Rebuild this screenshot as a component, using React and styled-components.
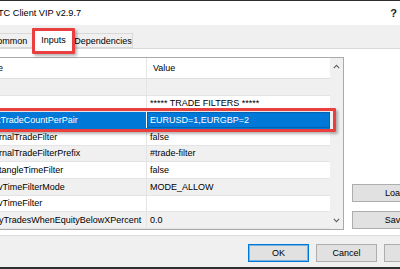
import React from 'react';
import styled, { createGlobalStyle } from 'styled-components';

const Global = createGlobalStyle`
  html, body { margin: 0; padding: 0; overflow: hidden; background: #fff; }
  body { font-family: "Liberation Sans", Arial, sans-serif; font-size: 9px; color: #000; }
  * { box-sizing: border-box; }
`;

const Window = styled.div`
  width: 400px;
  height: 269px;
  display: flex;
  flex-direction: column;
  overflow: hidden;
  border-top: 1px solid #2e2e2e;
  border-bottom: 2px solid #2e2e2e;
  background: #f0f0f0;
`;

const TitleBar = styled.div`
  height: 24px;
  flex: none;
  display: flex;
  align-items: center;
  justify-content: space-between;
  padding-right: 3px;
  background: #fff;
`;

const Title = styled.span`
  margin-left: -2px;
  font-size: 9.2px;
  color: #000;
`;

const Help = styled.span`
  font-size: 11px;
  font-weight: bold;
  color: #222;
`;

const TabStrip = styled.div`
  height: 24px;
  flex: none;
  display: flex;
  align-items: flex-end;
  background: #f0f0f0;
  border-bottom: 1px solid #d9d9d9;
  position: relative;
  z-index: 1;
`;

const Tab = styled.div`
  position: relative;
  flex: none;
  width: ${p => p.$w}px;
  margin-left: ${p => p.$ml || 0}px;
  height: ${p => (p.$active ? 19 : 15)}px;
  margin-bottom: ${p => (p.$active ? -1 : 0)}px;
  display: flex;
  align-items: center;
  justify-content: center;
  padding-top: ${p => (p.$active ? 0 : 1)}px;
  background: ${p => (p.$active ? '#fff' : '#f0f0f0')};
  border: 1px solid #d9d9d9;
  border-bottom: ${p => (p.$active ? 'none' : '1px solid #d9d9d9')};
  white-space: nowrap;
`;

const RedMark = styled.div`
  position: absolute;
  top: ${p => p.$t}px;
  bottom: ${p => p.$b}px;
  left: ${p => p.$l}px;
  right: ${p => p.$r}px;
  border: 3px solid #e9403f;
  border-radius: 1px;
  box-shadow: 2px 2px 3px rgba(0, 0, 0, 0.3);
  pointer-events: none;
  z-index: 3;
`;

const Body = styled.div`
  flex: 1;
  display: flex;
  align-items: stretch;
  padding: 8px 0 5px 0;
  background: #fff;
  border-bottom: 1px solid #dcdcdc;
`;

const Grid = styled.div`
  width: 344px;
  flex: none;
  display: flex;
  border: 1px solid #a9a9a9;
  border-left: none;
  background: #fff;
`;

const Table = styled.div`
  flex: 1;
  display: flex;
  flex-direction: column;
`;

const HeaderRow = styled.div`
  height: 21px;
  flex: none;
  display: grid;
  grid-template-columns: 147px 1fr;
  border-bottom: 1px solid #dedede;
`;

const HeaderCell = styled.div`
  display: flex;
  align-items: center;
  padding-left: ${p => p.$pad}px;
  border-right: ${p => (p.$divider ? '1px solid #e5e5e5' : 'none')};
  overflow: hidden;
  white-space: nowrap;
`;

const Row = styled.div`
  position: relative;
  height: 16.667px;
  flex: none;
  display: grid;
  grid-template-columns: 147px 1fr;
  background: ${p => (p.$sel ? '#0078d7' : p.$alt ? '#f0f0f0' : '#fff')};
  color: ${p => (p.$sel ? '#fff' : '#000')};
  border-bottom: 1px solid ${p => (p.$sel ? '#0078d7' : '#e4e4e4')};
`;

const NameCell = styled.div`
  display: flex;
  align-items: center;
  overflow: hidden;
  white-space: nowrap;
  border-right: 1px solid ${p => (p.$sel ? '#fff' : '#e4e4e4')};
`;

const NameText = styled.span`
  margin-left: ${p => p.$shift}px;
`;

const ValueCell = styled.div`
  display: flex;
  align-items: center;
  padding-left: 3px;
  overflow: hidden;
  white-space: nowrap;
  box-shadow: ${p => (p.$sel ? 'inset 0 0 0 1px #0063b1' : 'none')};
`;

const Scroll = styled.div`
  width: 13px;
  flex: none;
  display: flex;
  flex-direction: column;
  justify-content: space-between;
  background: #f0f0f0;
`;

const Arrow = styled.div`
  height: 17px;
  display: flex;
  align-items: center;
  justify-content: center;
`;

const Side = styled.div`
  flex: 1;
  display: flex;
  flex-direction: column;
  justify-content: flex-end;
  gap: 9px;
  padding: 0 0 1px 8px;
`;

const Button = styled.div`
  flex: none;
  width: ${p => p.$w}px;
  height: 18px;
  display: flex;
  align-items: center;
  justify-content: center;
  background: #e1e1e1;
  border: 1px solid ${p => (p.$default ? '#0078d7' : '#adadad')};
  box-shadow: ${p => (p.$default ? 'inset 0 0 0 1px rgba(0,120,215,0.45)' : 'none')};
  white-space: nowrap;
`;

const Footer = styled.div`
  height: 32px;
  flex: none;
  display: flex;
  align-items: flex-start;
  gap: 7px;
  padding: 8px 0 0 248px;
  background: #f0f0f0;
`;

const Chevron = ({ up }) => (
  <svg width="7" height="5" viewBox="0 0 7 5">
    <path
      d={up ? 'M0.8 4.2 L3.5 1.3 L6.2 4.2' : 'M0.8 0.8 L3.5 3.7 L6.2 0.8'}
      fill="none"
      stroke="#606060"
      strokeWidth="1.1"
    />
  </svg>
);

const rows = [
  { name: '', shift: 0, value: '' },
  { name: '', shift: 0, value: '***** TRADE FILTERS *****' },
  { name: 'xTradeCountPerPair', shift: -4, value: 'EURUSD=1,EURGBP=2', sel: true },
  { name: 'rnalTradeFilter', shift: -1, value: 'false' },
  { name: 'rnalTradeFilterPrefix', shift: -1, value: '#trade-filter' },
  { name: 'tangleTimeFilter', shift: -1, value: 'false' },
  { name: 'vTimeFilterMode', shift: -2, value: 'MODE_ALLOW' },
  { name: 'vTimeFilter', shift: -2, value: '' },
  { name: 'yTradesWhenEquityBelowXPercent', shift: -1, value: '0.0' },
];

export default function App() {
  return (
    <>
      <Global />
      <Window>
        <TitleBar>
          <Title>TC Client VIP v2.9.7</Title>
          <Help>?</Help>
        </TitleBar>
        <TabStrip>
          <Tab $w={50} $ml={-16}>Common</Tab>
          <Tab $w={39} $active>
            Inputs
            <RedMark $t={-3} $b={-5} $l={-3} $r={-3} />
          </Tab>
          <Tab $w={60}>Dependencies</Tab>
        </TabStrip>
        <Body>
          <Grid>
            <Table>
              <HeaderRow>
                <HeaderCell $pad={0} $divider>
                  <NameText $shift={-2}>e</NameText>
                </HeaderCell>
                <HeaderCell $pad={6}>Value</HeaderCell>
              </HeaderRow>
              {rows.map((r, i) => (
                <Row key={i} $alt={i % 2 === 0} $sel={r.sel}>
                  <NameCell $sel={r.sel}>
                    <NameText $shift={r.shift}>{r.name}</NameText>
                  </NameCell>
                  <ValueCell $sel={r.sel}>{r.value}</ValueCell>
                  {r.sel && <RedMark $t={-4} $b={-4} $l={-10} $r={-6} />}
                </Row>
              ))}
            </Table>
            <Scroll>
              <Arrow><Chevron up /></Arrow>
              <Arrow><Chevron /></Arrow>
            </Scroll>
          </Grid>
          <Side>
            <Button $w={86}>Load</Button>
            <Button $w={86}>Save</Button>
          </Side>
        </Body>
        <Footer>
          <Button $w={61} $default>OK</Button>
          <Button $w={61}>Cancel</Button>
          <Button $w={61}>Reset</Button>
        </Footer>
      </Window>
    </>
  );
}
